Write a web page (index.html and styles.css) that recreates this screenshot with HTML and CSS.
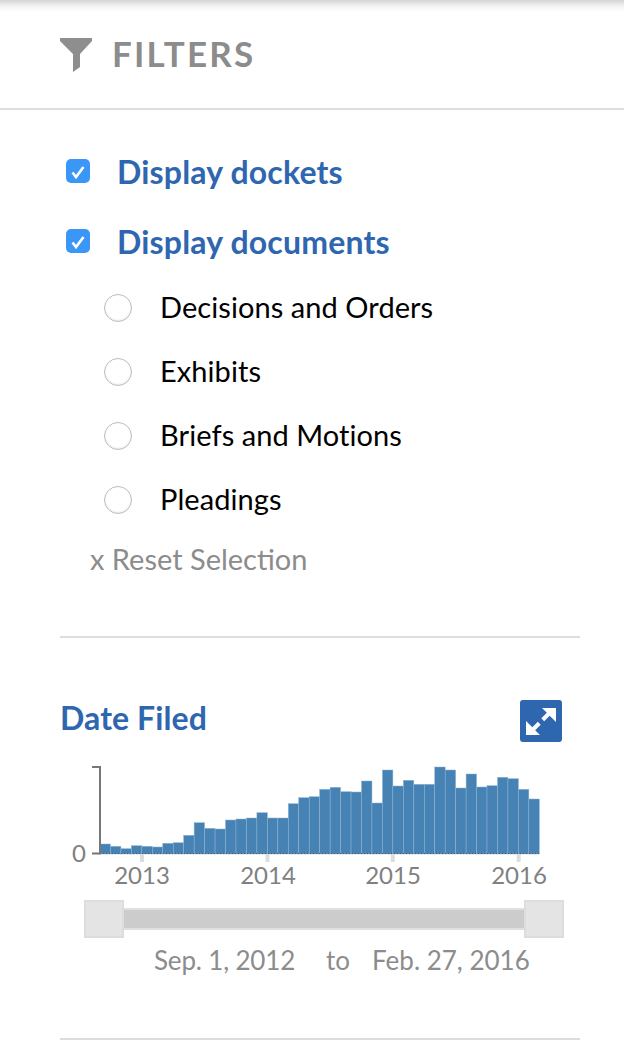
FILE: index.html
```html
<!DOCTYPE html>
<html lang="en">
<head>
<meta charset="utf-8">
<title>Filters</title>
<link rel="stylesheet" href="styles.css">
</head>
<body>
<aside class="panel">
  <header class="head">
    <svg class="funnel" width="32" height="34" viewBox="0 0 32 34"><path d="M0 0H32V3L20 16V29L13 34V16L0 3Z"/></svg>
    <h1 class="title">FILTERS</h1>
  </header>
  <section class="types">
    <label class="check"><span class="box"><svg width="24" height="24" viewBox="0 0 24 24"><path d="M6.5 13.5L10 18L17.5 8"/></svg></span>Display dockets</label>
    <label class="check check-two"><span class="box"><svg width="24" height="24" viewBox="0 0 24 24"><path d="M6.5 13.5L10 18L17.5 8"/></svg></span>Display documents</label>
    <ul class="radios">
      <li class="radio"><span class="dot"></span>Decisions and Orders</li>
      <li class="radio"><span class="dot"></span>Exhibits</li>
      <li class="radio"><span class="dot"></span>Briefs and Motions</li>
      <li class="radio"><span class="dot"></span>Pleadings</li>
    </ul>
    <div class="reset">x Reset Selection</div>
  </section>
  <section class="dates">
    <div class="dates-head">
      <h2 class="dates-title">Date Filed</h2>
      <span class="expand"><svg width="42" height="42" viewBox="0 0 42 42"><path d="M22 8H36V22L29.66 15.66L24.16 21.16L21.34 18.34L26.84 12.84ZM20 35H6V21L12.34 27.34L17.84 21.84L20.66 24.66L15.16 30.16Z"/></svg></span>
    </div>
    <svg class="chart" width="624" height="130" viewBox="0 760 624 130">
      <g class="bars">
        <rect x="100" y="844" width="10.46" height="10"/><rect x="110.46" y="846.3" width="10.46" height="7.7"/><rect x="120.92" y="848.7" width="10.46" height="5.3"/><rect x="131.38" y="845.7" width="10.46" height="8.3"/><rect x="141.84" y="846.3" width="10.46" height="7.7"/><rect x="152.3" y="847" width="10.46" height="7"/><rect x="162.76" y="843.3" width="10.46" height="10.7"/><rect x="173.22" y="842.7" width="10.46" height="11.3"/><rect x="183.68" y="835.3" width="10.46" height="18.7"/><rect x="194.14" y="822.7" width="10.46" height="31.3"/><rect x="204.6" y="828.3" width="10.46" height="25.7"/><rect x="215.06" y="829" width="10.46" height="25"/><rect x="225.52" y="820" width="10.46" height="34"/><rect x="235.98" y="819" width="10.46" height="35"/><rect x="246.44" y="818" width="10.46" height="36"/><rect x="256.9" y="812.7" width="10.46" height="41.3"/><rect x="267.36" y="818" width="10.46" height="36"/><rect x="277.82" y="818" width="10.46" height="36"/><rect x="288.28" y="803.7" width="10.46" height="50.3"/><rect x="298.74" y="797.7" width="10.46" height="56.3"/><rect x="309.2" y="796.7" width="10.46" height="57.3"/><rect x="319.66" y="789.3" width="10.46" height="64.7"/><rect x="330.12" y="787.3" width="10.46" height="66.7"/><rect x="340.58" y="791.7" width="10.46" height="62.3"/><rect x="351.04" y="792" width="10.46" height="62"/><rect x="361.5" y="781" width="10.46" height="73"/><rect x="371.96" y="803" width="10.46" height="51"/><rect x="382.42" y="770" width="10.46" height="84"/><rect x="392.88" y="786" width="10.46" height="68"/><rect x="403.34" y="780.3" width="10.46" height="73.7"/><rect x="413.8" y="784.3" width="10.46" height="69.7"/><rect x="424.26" y="784.3" width="10.46" height="69.7"/><rect x="434.72" y="767" width="10.46" height="87"/><rect x="445.18" y="770" width="10.46" height="84"/><rect x="455.64" y="788" width="10.46" height="66"/><rect x="466.1" y="774" width="10.46" height="80"/><rect x="476.56" y="787" width="10.46" height="67"/><rect x="487.02" y="785.7" width="10.46" height="68.3"/><rect x="497.48" y="777.3" width="10.46" height="76.7"/><rect x="507.94" y="778.7" width="10.46" height="75.3"/><rect x="518.4" y="789.3" width="10.46" height="64.7"/><rect x="528.86" y="799" width="10.46" height="55"/>
      </g>
      <path class="baseline" d="M100 853.5H539"/>
      <path class="axis" d="M92 767H100V853.5H92"/>
      <path class="tick" d="M142 854V862M267.5 854V862M392.8 854V862M518.7 854V862"/>
      <text class="label" x="86" y="862" text-anchor="end">0</text>
      <text class="label" x="142" y="884" text-anchor="middle">2013</text>
      <text class="label" x="268" y="884" text-anchor="middle">2014</text>
      <text class="label" x="393" y="884" text-anchor="middle">2015</text>
      <text class="label" x="519" y="884" text-anchor="middle">2016</text>
    </svg>
    <div class="slider">
      <span class="handle"></span>
      <span class="track"></span>
      <span class="handle"></span>
    </div>
    <div class="range">
      <span class="from">Sep. 1, 2012</span>
      <span class="to">to</span>
      <span class="until">Feb. 27, 2016</span>
    </div>
  </section>
</aside>
</body>
</html>
```
FILE: styles.css
```css
* { box-sizing: border-box; }
html, body { margin: 0; padding: 0; }
body {
  width: 624px;
  height: 1050px;
  overflow: hidden;
  background: #fff;
  font-family: Lato, "Liberation Sans", sans-serif;
}
.panel { position: relative; height: 1050px; }
.panel::before {
  content: "";
  position: absolute;
  left: 0; right: 0; top: 0;
  height: 12px;
  background: linear-gradient(#d4d4d4, #f4f4f4 55%, #fff);
}
.head {
  height: 110px;
  border-bottom: 2px solid #ddd;
  display: flex;
  align-items: flex-start;
  padding: 38px 0 0 60px;
}
.funnel { fill: #8e8e8e; flex: none; }
.title {
  margin: -5px 0 0 20px;
  font-size: 35px;
  line-height: 40px;
  font-weight: 700;
  letter-spacing: 2.2px;
  color: #8c8c8c;
}
.types {
  margin: 0 44px 0 60px;
  padding: 41px 0 0 6px;
  height: 528px;
  border-bottom: 2px solid #ddd;
}
.check {
  display: flex;
  align-items: center;
  height: 40px;
  font-size: 32px;
  font-weight: 700;
  letter-spacing: 0.18px;
  color: #2f66b0;
}
.check-two { margin-top: 30px; }
.box {
  width: 24px; height: 24px;
  margin: 0 27px 0 0;
  border-radius: 5px;
  background: #3a97f8;
  flex: none;
  display: flex;
}
.box path { fill: none; stroke: #fff; stroke-width: 2.6; }
.radios { list-style: none; margin: 13px 0 0; padding: 0 0 0 38px; }
.radio {
  display: flex;
  align-items: center;
  height: 64px;
  font-size: 29px;
  letter-spacing: 0.07px;
  color: #000;
}
.dot {
  width: 28px; height: 28px;
  margin: 4px 28px 0 0;
  border-radius: 50%;
  border: 1.5px solid #bdbdbd;
  box-shadow: inset 0 -1px 2px #e8e8e8;
  flex: none;
}
.reset { margin: 9px 0 0 24px; font-size: 29px; line-height: 40px; color: #8c8c8c; }
.dates { margin: 0 44px 0 60px; height: 402px; border-bottom: 2px solid #ddd; position: relative; }
.dates-head {
  display: flex;
  justify-content: space-between;
  align-items: flex-start;
  padding-top: 62px;
  height: 122px;
  margin-right: 18px;
}
.dates-title { margin: -2px 0 0 0; font-size: 32px; line-height: 40px; font-weight: 700; letter-spacing: 0.1px; color: #2f66b0; }
.expand { width: 42px; height: 42px; border-radius: 3px; background: #2f66b0; display: block; }
.expand path { fill: #fff; }
.chart { display: block; margin-left: -60px; }
.bars rect { fill: #4682b4; stroke: #8fb3d1; stroke-width: 0.5; }
.baseline { fill: none; stroke: #555; stroke-width: 1; stroke-dasharray: 1 2; }
.axis { fill: none; stroke: #777; stroke-width: 2; }
.tick { fill: none; stroke: #ddd; stroke-width: 4; }
.label { font-family: Lato, sans-serif; font-size: 24px; fill: #808080; }
.slider {
  display: flex;
  align-items: center;
  height: 38px;
  margin: 10px 16px 0 24px;
}
.handle {
  width: 40px; height: 38px;
  background: #e4e4e4;
  border: 2px solid #ddd;
  flex: none;
}
.track {
  flex: 1;
  height: 22px;
  background: #ccc;
  border-top: 2px solid #e0e0e0;
  border-bottom: 2px solid #e0e0e0;
}
.range {
  display: flex;
  margin: 4px 0 0 94px;
  font-size: 26px;
  line-height: 36px;
  color: #8c8c8c;
}
.from { letter-spacing: -0.17px; }
.to { margin-left: 31px; }
.until { margin-left: 22px; }
```
